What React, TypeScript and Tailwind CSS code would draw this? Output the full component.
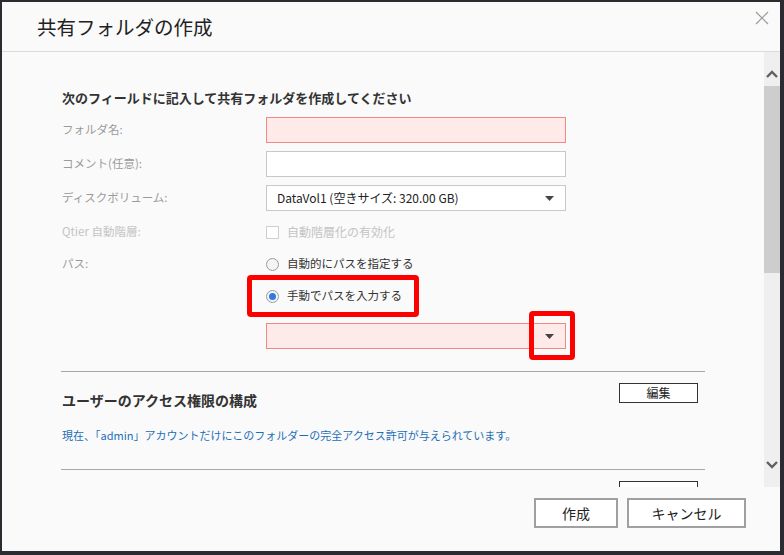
import React from "react";

const font = { fontFamily: '"Noto Sans CJK JP", "Noto Sans", sans-serif' };

function Caret() {
  return (
    <svg width="9" height="5" viewBox="0 0 9 5" className="absolute right-[11px] top-[10px]">
      <path d="M0 0 L9 0 L4.5 5 Z" fill="#444" />
    </svg>
  );
}

function Label({ children, light }: { children: React.ReactNode; light?: boolean }) {
  return (
    <div className={`w-[204px] shrink-0 text-[11.5px] ${light ? "text-[#c4c4c4]" : "text-[#9a9a9a]"}`}>{children}</div>
  );
}

export default function App() {
  return (
    <div className="w-[784px] h-[555px] bg-[#2a2c31] pt-[2px] pl-[2px] overflow-hidden" style={font}>
      <div className="w-[778px] h-[549px] bg-[#fafafa] flex flex-col relative">
        {/* header */}
        <div className="h-[50px] shrink-0 border-b border-[#dcdcdc] flex items-center pl-[35px] relative">
          <span className="text-[19.5px] text-[#222] leading-none">共有フォルダの作成</span>
          <svg width="14" height="14" viewBox="0 0 14 14" className="absolute left-[753px] top-[9px]">
            <path d="M1 1 L13 13 M13 1 L1 13" stroke="#9a9a9a" strokeWidth="1.2" />
          </svg>
        </div>
        {/* scroll area */}
        <div className="h-[435px] shrink-0 flex overflow-hidden">
          <div className="w-[762px] pl-[60px] overflow-hidden relative">
            <div className="mt-[36px] h-[20px] leading-[20px] text-[13px] font-bold text-[#333]">
              次のフィールドに記入して共有フォルダを作成してください
            </div>
            <div className="mt-[9px] h-[26px] flex items-center">
              <Label>フォルダ名:</Label>
              <div className="w-[300px] h-[26px] bg-[#ffeaea] border border-[#f08a80]" />
            </div>
            <div className="mt-[8px] h-[26px] flex items-center">
              <Label>コメント(任意):</Label>
              <div className="w-[300px] h-[26px] bg-white border border-[#c8c8c8]" />
            </div>
            <div className="mt-[8px] h-[26px] flex items-center">
              <Label>ディスクボリューム:</Label>
              <div className="w-[300px] h-[26px] bg-white border border-[#c8c8c8] relative flex items-center pl-[10px] text-[12px] text-[#222]">
                DataVol1 (空きサイズ: 320.00 GB)
                <Caret />
              </div>
            </div>
            <div className="mt-[8px] h-[26px] flex items-center">
              <Label light>Qtier 自動階層:</Label>
              <div className="w-[13px] h-[13px] border border-[#cfcfcf] bg-white" />
              <span className="ml-[8px] text-[12px] text-[#c4c4c4]">自動階層化の有効化</span>
            </div>
            <div className="mt-[6px] h-[26px] flex items-center">
              <Label>パス:</Label>
              <div className="w-[13px] h-[13px] rounded-full border border-[#9a9a9a] bg-[#f4f4f4]" />
              <span className="ml-[8px] text-[11.5px] text-[#333]">自動的にパスを指定する</span>
            </div>
            <div className="mt-[6px] h-[26px] flex items-center">
              <Label>{""}</Label>
              <div className="w-[13px] h-[13px] rounded-full border border-[#9a9a9a] bg-[#f4f4f4] flex items-center justify-center">
                <div className="w-[7px] h-[7px] rounded-full bg-[#2f7be0]" />
              </div>
              <span className="ml-[8px] text-[11.5px] text-[#333]">手動でパスを入力する</span>
            </div>
            <div className="mt-[14px] h-[26px] flex items-center">
              <Label>{""}</Label>
              <div className="w-[300px] h-[26px] bg-[#ffeaea] border border-[#f08a80] relative">
                <Caret />
              </div>
            </div>
            <div className="mt-[22px] ml-[-1px] w-[644px] border-t border-[#a8a8a8]" />
            <div className="mt-[11px] w-[643px] h-[27px] flex justify-between items-start">
              <div className="self-end h-[20px] leading-[20px] text-[14px] font-bold text-[#333]">
                ユーザーのアクセス権限の構成
              </div>
              <div className="mr-[7px] w-[79px] h-[20px] border border-[#333] bg-white flex items-center justify-center text-[12px] text-[#222]">
                編集
              </div>
            </div>
            <div className="mt-[15px] h-[20px] leading-[20px] text-[11px] text-[#1c6fb8]">
              現在、「admin」アカウントだけにこのフォルダーの完全アクセス許可が与えられています。
            </div>
            <div className="mt-[24px] ml-[-1px] w-[644px] border-t border-[#a8a8a8]" />
            <div className="mt-[11px] w-[643px] flex justify-end">
              <div className="mr-[7px] w-[79px] h-[20px] border border-[#333] bg-white" />
            </div>
            {/* red highlight boxes */}
            <div className="absolute left-[245px] top-[223px] w-[172px] h-[42px] border-[5px] border-[#ff0000] rounded-[4px]" />
            <div className="absolute left-[527px] top-[259px] w-[46px] h-[49px] border-[5px] border-[#ff0000] rounded-[4px]" />
          </div>
          {/* scrollbar */}
          <div className="w-[16px] h-[435px] bg-[#efefef] flex flex-col items-center">
            <svg width="12" height="8" viewBox="0 0 12 8" className="mt-[18px]">
              <path d="M1 7 L6 2 L11 7" stroke="#606060" strokeWidth="2.4" fill="none" />
            </svg>
            <div className="mt-[8px] w-[16px] h-[187px] bg-[#cdcdcd]" />
            <div className="flex-1" />
            <svg width="12" height="8" viewBox="0 0 12 8" className="mb-[18px]">
              <path d="M1 1 L6 6 L11 1" stroke="#606060" strokeWidth="2.4" fill="none" />
            </svg>
          </div>
        </div>
        {/* footer */}
        <div className="flex justify-end gap-[9px] pr-[34px] pt-[11px]">
          <div className="w-[84px] h-[30px] border-2 border-[#a0a0a0] bg-white flex items-center justify-center text-[14px] text-[#222]">
            作成
          </div>
          <div className="w-[119px] h-[30px] border-2 border-[#a0a0a0] bg-white flex items-center justify-center text-[14px] text-[#222]">
            キャンセル
          </div>
        </div>
      </div>
    </div>
  );
}
